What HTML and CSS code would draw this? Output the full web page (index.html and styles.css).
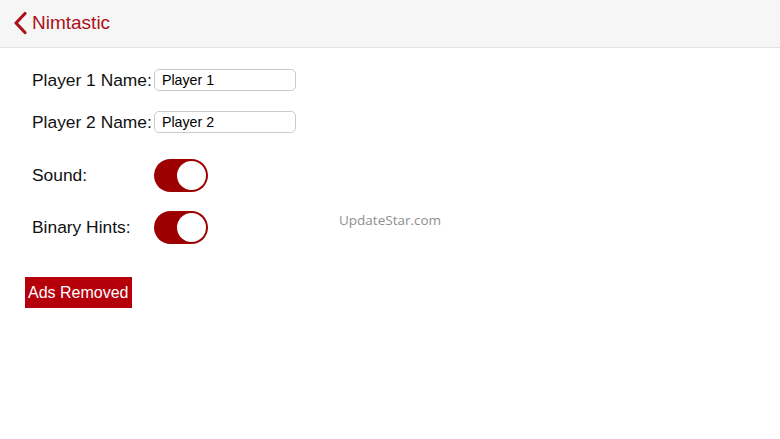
FILE: index.html
```html
<!DOCTYPE html>
<html>
	<head>
		<meta charset="utf-8">
		<title>Settings</title>
		<link rel="stylesheet" href="styles.css">
	</head>
	<body>
		<div class="navbar">
			<a class="back" href="#">
				<svg width="16" height="24" viewBox="0 0 16 24"><polyline points="13,2.5 4,12 13,21.5" fill="none" stroke="#ab1119" stroke-width="3.2" stroke-linecap="round" stroke-linejoin="round"/></svg>
				<span>Nimtastic</span>
			</a>
		</div>
		<div class="content">
			<div class="row">
				<label>Player 1 Name:</label>
				<input type="text" class="name" value="Player 1">
			</div>
			<div class="row">
				<label>Player 2 Name:</label>
				<input type="text" class="name" value="Player 2">
			</div>
			<div class="row switch-row first">
				<label>Sound:</label>
				<span class="switch"><span class="knob"></span></span>
			</div>
			<div class="row switch-row">
				<label>Binary Hints:</label>
				<span class="switch"><span class="knob"></span></span>
			</div>
			<button class="ads">Ads Removed</button>
		</div>
		<div class="watermark">UpdateStar.com</div>
	</body>
</html>
```

FILE: styles.css
```css
*{margin: 0;padding: 0;box-sizing: border-box;}
body{
	width: 780px;height: 439px;
	background: #fff;
	font-family: "Liberation Sans", Arial, sans-serif;
	color: #111;
	position: relative;
	overflow: hidden;
}
.navbar{
	height: 48px;
	background: #f6f6f6;
	border-bottom: 1px solid #e2e2e2;
	display: flex;
	align-items: center;
	padding-left: 12px;
}
.back{
	display: flex;
	align-items: center;
	gap: 4px;
	color: #ab1119;
	text-decoration: none;
	font-size: 19px;
	margin-top: -1px;
}
.content{
	padding: 11px 0 0 32px;
}
.row{
	display: grid;
	grid-template-columns: 122px auto;
	align-items: center;
	height: 42px;
	font-size: 17.4px;
}
.switch-row{height: 52px;}
.switch-row.first{margin-top: 6px;}
.name{
	width: 142px;height: 22px;
	border: 1px solid #cbcbcb;
	border-radius: 5px;
	padding-left: 7px;
	font-family: inherit;
	font-size: 14.2px;
	color: #000;
	outline: 0;
	background: #fff;
}
.switch{
	width: 54px;height: 33px;
	border-radius: 17px;
	background: #9d0000;
	display: flex;
	align-items: center;
	justify-content: flex-end;
	padding-right: 2px;
}
.knob{
	width: 29px;height: 29px;
	border-radius: 50%;
	background: #fff;
}
.ads{
	margin: 24px 0 0 -7px;
	height: 31px;
	padding: 0 3px;
	border: 0;
	background: #b5000c;
	color: #fff;
	font-family: inherit;
	font-size: 16px;
}
.watermark{
	position: absolute;
	left: 339px;top: 211px;
	color: #8f8f8f;
	font-family: "Open Sans", sans-serif;
	font-size: 13.5px;
}
```
